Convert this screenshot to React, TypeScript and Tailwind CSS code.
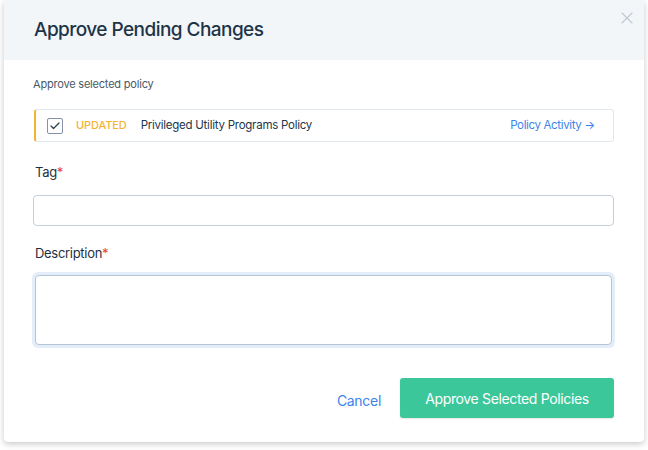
import { X, Check } from 'lucide-react';

const App = () => {
    return (
        <div className="w-[648px] h-[450px] bg-white font-['Inter',sans-serif]">
            <div className="ml-[4px] w-[640px] h-[442px] bg-white rounded-[4px] shadow-[0_2px_6px_rgba(0,0,0,0.22)] overflow-hidden flex flex-col">
                {/* Header */}
                <div className="relative h-[60px] bg-[#f3f6f9] px-[30px] flex items-center">
                    <h2 className="text-[19px] font-medium text-[#1e3448] tracking-[-0.55px]">Approve Pending Changes</h2>
                    <button className="absolute right-[7px] top-[8px] text-[#bfc8d1]">
                        <X className="w-[20px] h-[20px]" strokeWidth={1.3} />
                    </button>
                </div>

                {/* Body */}
                <div className="pl-[29px] pr-[30px] flex flex-col">
                    <p className="mt-[16px] text-[11px] leading-[16px] text-[#4a5866] tracking-[-0.2px]">Approve selected policy</p>

                    <div className="mt-[17px] ml-[1px] h-[33px] flex items-center border border-[#e1e7ee] border-l-2 border-l-[#f5b331] rounded-[3px] pl-[11px] pr-[18px]">
                        <div className="w-[16px] h-[16px] border border-[#8494a5] rounded-[2px] flex items-center justify-center text-[#2d3e50]">
                            <Check className="w-[12px] h-[12px]" strokeWidth={2.5} />
                        </div>
                        <span className="ml-[13px] text-[11px] font-medium text-[#f5b331] tracking-[-0.1px]">UPDATED</span>
                        <span className="ml-[14px] text-[11.5px] text-[#22364a] tracking-[-0.25px]">Privileged Utility Programs Policy</span>
                        <a className="ml-auto text-[11.5px] text-[#3d83ea] tracking-[-0.35px]">Policy Activity →</a>
                    </div>

                    <label className="mt-[20px] ml-[2px] text-[13px] leading-[20px] text-[#1f2f3f] tracking-[-0.3px]">
                        Tag<span className="text-[#e53e3e]">*</span>
                    </label>
                    <input className="mt-[13px] h-[31px] w-full border border-[#c3cfdb] rounded-[4px] px-3 outline-none" />

                    <label className="mt-[17px] ml-[2px] text-[13px] leading-[20px] text-[#1f2f3f] tracking-[-0.3px]">
                        Description<span className="text-[#e53e3e]">*</span>
                    </label>
                    <div className="mt-[9px] rounded-[6px] p-[3px] bg-[#e4eefa] -mx-[1px]">
                        <textarea className="block h-[70px] w-full border border-[#b5c4d3] rounded-[4px] bg-white px-3 py-2 resize-none outline-none" />
                    </div>

                    <div className="mt-[30px] flex items-center justify-end">
                        <button className="text-[14px] text-[#3d83ea] mt-[4px] tracking-[-0.3px]">Cancel</button>
                        <button className="ml-[19px] h-[40px] w-[214px] rounded-[3px] bg-[#3cc79a] text-white text-[14px] tracking-[-0.35px] shadow-[0_1px_2px_rgba(0,0,0,0.1)]">
                            Approve Selected Policies
                        </button>
                    </div>
                </div>
            </div>
        </div>
    );
};

export default App;
